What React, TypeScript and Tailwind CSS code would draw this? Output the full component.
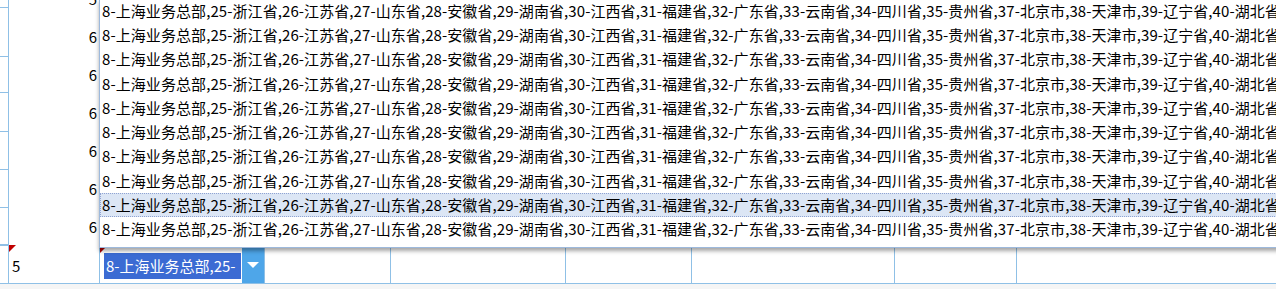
const ITEM =
  "8-上海业务总部,25-浙江省,26-江苏省,27-山东省,28-安徽省,29-湖南省,30-江西省,31-福建省,32-广东省,33-云南省,34-四川省,35-贵州省,37-北京市,38-天津市,39-辽宁省,40-湖北省";

const leftLines = [8, 48.7, 36.6, 38.4, 38.3, 37.7, 37.4];

export default function App() {
  const rows = Array.from({ length: 10 }, (_, i) => i);

  return (
    <div className="relative w-[1276px] h-[289px] overflow-hidden bg-white text-[15px] text-black font-['Noto_Sans_CJK_SC','Noto_Sans',sans-serif]">
      <div className="flex flex-col h-full">
        {/* rows above, mostly hidden under the dropdown list */}
        <div className="flex h-[245px]">
          <div className="w-[9px] border-r border-[#8fc0e6] flex flex-col">
            {leftLines.map((h, i) => (
              <div key={i} style={{ height: h }} className="border-b border-[#8fc0e6] shrink-0" />
            ))}
          </div>
          <div className="w-[90px] flex flex-col items-end pr-[2px] mt-[-20px] leading-[38px]">
            <span>5</span>
            <span>6</span>
            <span>6</span>
            <span>6</span>
            <span>6</span>
            <span>6</span>
            <span>6</span>
          </div>
          <div className="flex-1" />
        </div>

        {/* row 5 with the open combo */}
        <div className="flex h-[39px] border-b border-[#8fc0e6]">
          <div className="w-[9px] border-r border-t border-[#8fc0e6]" />
          <div className="relative w-[90px] pl-[3px] pt-[12px] leading-[18px]">
            <div className="absolute left-0 top-0 w-0 h-0 border-t-[7px] border-r-[7px] border-t-[#c00000] border-r-transparent" />
            <span>5</span>
          </div>
          <div className="relative w-[166px] border-l border-r border-[#8fc0e6] flex pl-[4px] pt-[2px]">
            <div className="absolute left-0 top-[2px] w-0 h-0 border-t-[6px] border-r-[6px] border-t-[#b00000] border-r-transparent" />
            <div className="w-[137px] mt-[6px] mb-[4px] bg-[#3b6bd3] text-white overflow-hidden whitespace-nowrap leading-[26px] pl-[2px]">
              8-上海业务总部,25-
            </div>
            <div className="w-[22px] ml-[1px] bg-[#4ea6e9] flex items-center justify-center">
              <div className="w-0 h-0 border-l-[6px] border-r-[6px] border-t-[6px] border-l-transparent border-r-transparent border-t-white" />
            </div>
          </div>
          <div className="w-[126px] border-r border-[#8fc0e6]" />
          <div className="w-[175px] border-r border-[#8fc0e6]" />
          <div className="w-[126px] border-r border-[#8fc0e6]" />
          <div className="w-[203px] border-r border-[#8fc0e6]" />
          <div className="w-[122px] border-r border-[#8fc0e6]" />
          <div className="flex-1" />
        </div>
        <div className="flex-1 bg-[#f5f5f5]" />
      </div>

      {/* dropdown list */}
      <div className="absolute left-[99px] top-[-1.4px] w-[1200px] bg-white border-l border-b border-[#9db9dc] pb-[5px] shadow-[0_3px_4px_rgba(0,0,0,0.35)] tracking-[0.08px]">
        {rows.map((i) => (
          <div
            key={i}
            className={
              i === 8
                ? "h-[24.3px] leading-[22px] pl-[1px] whitespace-nowrap bg-[#dce6f5] border border-dotted border-[#8fa3d2]"
                : "h-[24.3px] leading-[24.3px] pl-[2px] whitespace-nowrap"
            }
          >
            {ITEM}
          </div>
        ))}
      </div>
    </div>
  );
}
